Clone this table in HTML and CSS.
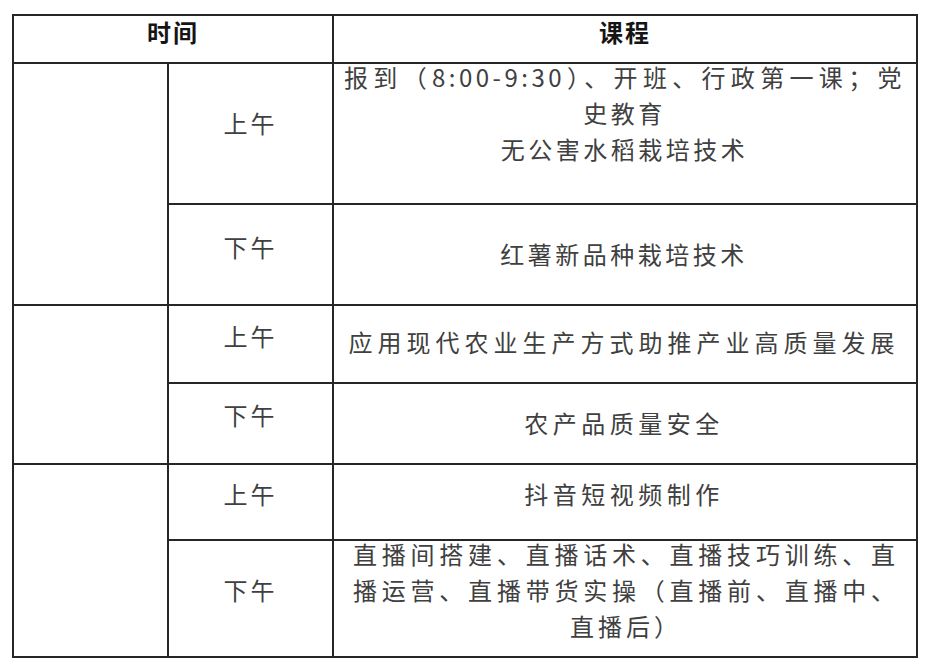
FILE: index.html
```html
<!DOCTYPE html>
<html lang="zh-CN">
<head>
<meta charset="utf-8">
<title>课程安排</title>
<link rel="stylesheet" href="styles.css">
</head>
<body>
<table class="schedule">
  <colgroup>
    <col class="col-day">
    <col class="col-time">
    <col class="col-course">
  </colgroup>
  <thead>
    <tr class="row-head">
      <th colspan="2" class="head">时间</th>
      <th class="head">课程</th>
    </tr>
  </thead>
  <tbody>
    <tr class="row-1">
      <td rowspan="2" class="day"></td>
      <td class="time pb-22">上午</td>
      <td class="course multi ls-35 pad-a">
        <div class="lines">
          <p class="just">报到（8:00-9:30）、开班、行政第一课；党</p>
          <p>史教育</p>
          <p>无公害水稻栽培技术</p>
        </div>
      </td>
    </tr>
    <tr class="row-2">
      <td class="time pb-15">下午</td>
      <td class="course ls-35 pb-2">红薯新品种栽培技术</td>
    </tr>
    <tr class="row-3">
      <td rowspan="2" class="day"></td>
      <td class="time pb-17">上午</td>
      <td class="course ls-5 pb-5">应用现代农业生产方式助推产业高质量发展</td>
    </tr>
    <tr class="row-4">
      <td class="time pb-17">下午</td>
      <td class="course ls-45 pb-2">农产品质量安全</td>
    </tr>
    <tr class="row-5">
      <td rowspan="2" class="day"></td>
      <td class="time pb-17">上午</td>
      <td class="course ls-45 pb-17">抖音短视频制作</td>
    </tr>
    <tr class="row-6">
      <td class="time pb-17">下午</td>
      <td class="course multi ls-4 pad-b">
        <div class="lines">
          <p class="just">直播间搭建、直播话术、直播技巧训练、直</p>
          <p class="just">播运营、直播带货实操（直播前、直播中、</p>
          <p>直播后）</p>
        </div>
      </td>
    </tr>
  </tbody>
</table>
</body>
</html>
```

FILE: styles.css
```css
* {
  box-sizing: border-box;
}

body {
  margin: 0;
  background: #ffffff;
  font-family: "Noto Sans CJK SC", "Noto Sans", sans-serif;
  color: #404040;
}

.schedule {
  margin: 14px 0 0 12px;
  width: 906px;
  table-layout: fixed;
  border-collapse: separate;
  border-spacing: 0;
  border-left: 2px solid #262626;
  border-top: 2px solid #262626;
}

.col-day { width: 155px; }
.col-time { width: 165px; }

.schedule th,
.schedule td {
  border-right: 2px solid #262626;
  border-bottom: 2px solid #262626;
  padding: 0;
  text-align: center;
  vertical-align: middle;
  font-size: 24px;
  line-height: 36px;
}

.row-head { height: 48px; }
.row-1 { height: 141px; }
.row-2 { height: 101px; }
.row-3 { height: 78px; }
.row-4 { height: 81px; }
.row-5 { height: 76px; }
.row-6 { height: 117px; }

.schedule .head {
  font-weight: 700;
  color: #151515;
  letter-spacing: 2px;
  line-height: 28px;
  padding-bottom: 15px;
}

.schedule .time {
  letter-spacing: 3px;
}

.schedule .course {
  padding-left: 11px;
  padding-right: 13px;
}

.schedule .course.multi {
  vertical-align: top;
}

.schedule .pad-a {
  padding-left: 10px;
  padding-right: 11px;
}

.schedule .pad-b {
  padding-left: 19px;
  padding-right: 17px;
}

.lines {
  margin-top: -5px;
}

.lines p {
  margin: 0;
}

.lines .just {
  text-align: justify;
  text-align-last: justify;
}

.ls-35 { letter-spacing: 3.5px; }
.ls-4 { letter-spacing: 4px; }
.ls-45 { letter-spacing: 4.5px; }
.ls-5 { letter-spacing: 5px; }

.schedule .pb-2 { padding-bottom: 2px; }
.schedule .pb-5 { padding-bottom: 5px; }
.schedule .pb-15 { padding-bottom: 15px; }
.schedule .pb-17 { padding-bottom: 17px; }
.schedule .pb-22 { padding-bottom: 22px; }
```
